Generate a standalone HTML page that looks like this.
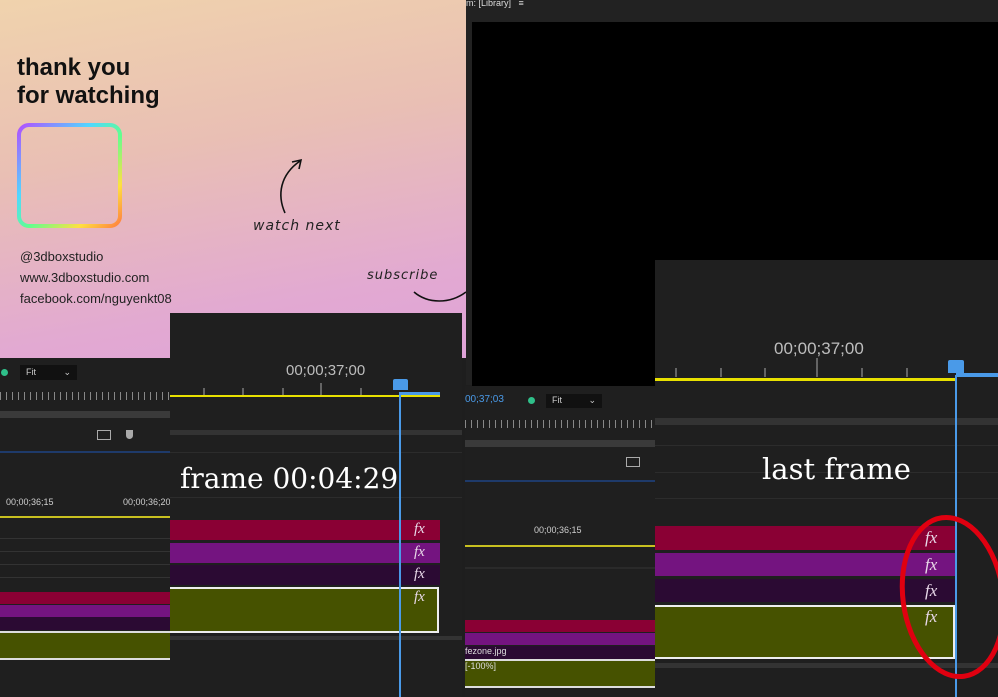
<!DOCTYPE html>
<html><head><meta charset="utf-8"><style>
*{margin:0;padding:0;box-sizing:border-box}
body{width:998px;height:697px;overflow:hidden;background:#1e1e1e;position:relative;font-family:"Liberation Sans",sans-serif}
.a{position:absolute}
.serif{font-family:"DejaVu Serif","Liberation Serif",serif;color:#fff}
.fx{position:absolute;font-family:"Liberation Serif",serif;font-style:italic;color:#e8d8e8;font-size:15px}
.tc{color:#bdbdbd;font-size:15px}
.sm{color:#cfcfcf;font-size:9px}
</style></head><body>
<div class="a" style="left:0;top:0;width:466px;height:358px;background:linear-gradient(170deg,#f0d3ad 0%,#e9bfb4 40%,#e2a9d2 80%,#dfa3d8 100%)"></div>
<div class="a" style="left:17px;top:54px;font-weight:bold;font-size:24px;line-height:28px;color:#111">thank you<br>for watching</div>
<svg class="a" style="left:15px;top:121px" width="110" height="110"><defs><linearGradient id="g" x1="0" y1="0" x2="1" y2="1"><stop offset="0" stop-color="#b050ff"/><stop offset=".35" stop-color="#50d8ff"/><stop offset=".55" stop-color="#60ff90"/><stop offset=".8" stop-color="#ffe040"/><stop offset="1" stop-color="#ff8040"/></linearGradient><linearGradient id="g2" x1="0" y1="0" x2="0" y2="1"><stop offset="0" stop-color="#e050ff"/><stop offset="1" stop-color="#ff9040"/></linearGradient></defs>
<rect x="4" y="4" width="101" height="101" rx="10" fill="none" stroke="url(#g)" stroke-width="4"/>
<path d="M4 20 V95" stroke="url(#g2)" stroke-width="4"/></svg>
<div class="a" style="left:20px;top:246px;font-size:13px;line-height:21px;color:#222">@3dboxstudio<br>www.3dboxstudio.com<br>facebook.com/nguyenkt08</div>
<svg class="a" style="left:275px;top:155px" width="40" height="60"><path d="M10 58 C2 40,5 20,25 6 M17 7 L26 5 L24 14" fill="none" stroke="#111" stroke-width="1.6"/></svg>
<div class="a" style="left:253px;top:218px;font-style:italic;font-size:14px;color:#222;letter-spacing:1px;font-family:'DejaVu Sans',sans-serif">watch next</div>
<div class="a" style="left:367px;top:268px;font-style:italic;font-size:13px;color:#222;letter-spacing:1px;font-family:'DejaVu Sans',sans-serif">subscribe</div>
<svg class="a" style="left:410px;top:282px" width="60" height="25"><path d="M4 10 C18 22,40 22,56 10" fill="none" stroke="#111" stroke-width="1.6"/></svg>
<div class="a" style="left:466px;top:0;width:532px;height:385px;background:#222"></div>
<div class="a sm" style="left:466px;top:-2px;font-size:9px;color:#ddd">m: [Library] &nbsp; ≡</div>
<div class="a" style="left:472px;top:22px;width:526px;height:364px;background:#000"></div>
<div class="a" style="left:0;top:358px;width:170px;height:339px;background:#1f1f1f"></div>
<div class="a" style="left:1px;top:369px;width:7px;height:7px;border-radius:50%;background:#2fc08a"></div>
<div class="a" style="left:20px;top:365px;width:57px;height:15px;background:#111;color:#ccc;font-size:9px;padding:2px 6px">Fit <span style="float:right">⌄</span></div>
<div class="a" style="left:0;top:392px;width:170px;height:8px;background:repeating-linear-gradient(90deg,#888 0 1px,transparent 1px 6px)"></div>
<div class="a" style="left:0;top:411px;width:170px;height:7px;background:#3a3a3a"></div>
<div class="a" style="left:97px;top:430px;width:14px;height:10px;border:1.5px solid #aaa"></div>
<div class="a" style="left:126px;top:430px;width:7px;height:9px;background:#aaa;border-radius:0 0 4px 4px"></div>
<div class="a" style="left:0;top:451px;width:170px;height:2px;background:#1e3a6a"></div>
<div class="a sm" style="left:6px;top:497px">00;00;36;15</div>
<div class="a sm" style="left:123px;top:497px">00;00;36;20</div>
<div class="a" style="left:0;top:516px;width:170px;height:2px;background:#c8c020"></div>
<div class="a" style="left:0;top:538px;width:170px;height:1px;background:#333"></div>
<div class="a" style="left:0;top:551px;width:170px;height:1px;background:#333"></div>
<div class="a" style="left:0;top:564px;width:170px;height:1px;background:#333"></div>
<div class="a" style="left:0;top:577px;width:170px;height:1px;background:#333"></div>
<div class="a" style="left:0;top:592px;width:170px;height:12px;background:#8a0034"></div>
<div class="a" style="left:0;top:605px;width:170px;height:12px;background:#741480"></div>
<div class="a" style="left:0;top:617px;width:170px;height:13px;background:#2b0a33"></div>
<div class="a" style="left:0;top:631px;width:170px;height:29px;background:#465200;border-top:2px solid #ddd;border-bottom:2px solid #ddd"></div>
<div class="a" style="left:465px;top:386px;width:190px;height:311px;background:#1f1f1f"></div>
<div class="a" style="left:465px;top:394px;font-size:10px;color:#4a9ae8">00;37;03</div>
<div class="a" style="left:528px;top:397px;width:7px;height:7px;border-radius:50%;background:#2fc08a"></div>
<div class="a" style="left:546px;top:394px;width:56px;height:14px;background:#111;color:#ccc;font-size:9px;padding:1px 6px">Fit <span style="float:right">⌄</span></div>
<div class="a" style="left:465px;top:420px;width:190px;height:8px;background:repeating-linear-gradient(90deg,#888 0 1px,transparent 1px 6px)"></div>
<div class="a" style="left:465px;top:440px;width:190px;height:7px;background:#3a3a3a"></div>
<div class="a" style="left:626px;top:457px;width:14px;height:10px;border:1.5px solid #aaa"></div>
<div class="a" style="left:465px;top:480px;width:190px;height:2px;background:#1e3a6a"></div>
<div class="a sm" style="left:534px;top:525px">00;00;36;15</div>
<div class="a" style="left:465px;top:545px;width:190px;height:2px;background:#c8c020"></div>
<div class="a" style="left:465px;top:567px;width:190px;height:2px;background:#2a2a2a"></div>
<div class="a" style="left:465px;top:620px;width:190px;height:12px;background:#8a0034"></div>
<div class="a" style="left:465px;top:633px;width:190px;height:12px;background:#741480"></div>
<div class="a sm" style="left:465px;top:646px;width:190px;height:13px;background:#2b0a33;color:#ddd">fezone.jpg</div>
<div class="a sm" style="left:465px;top:659px;width:190px;height:29px;background:#465200;border-top:2px solid #ddd;border-bottom:2px solid #ddd;color:#ddd">[-100%]</div>
<div class="a" style="left:170px;top:313px;width:292px;height:384px;background:#1f1f1f"></div>
<div class="a tc" style="left:286px;top:362px">00;00;37;00</div>
<svg class="a" style="left:170px;top:380px" width="292" height="20"><g stroke="#aaa" stroke-width="1"><path d="M34 8V15M73 8V15M113 8V15M151 3V15M191 8V15"/></g></svg>
<div class="a" style="left:170px;top:395px;width:270px;height:2px;background:#e8e000"></div>
<div class="a" style="left:400px;top:392px;width:40px;height:3px;background:#4a9ae8"></div>
<div class="a" style="left:393px;top:379px;width:15px;height:11px;background:#4a9ae8;border-radius:2px 2px 0 0"></div>
<div class="a" style="left:170px;top:430px;width:292px;height:5px;background:#333"></div>
<div class="a" style="left:170px;top:452px;width:292px;height:1px;background:#2c2c2c"></div>
<div class="a" style="left:170px;top:497px;width:292px;height:1px;background:#2c2c2c"></div>
<div class="a serif" style="left:180px;top:462px;font-size:28px">frame 00:04:29</div>
<div class="a" style="left:170px;top:520px;width:270px;height:20px;background:#8a0034"></div>
<div class="a" style="left:170px;top:543px;width:270px;height:20px;background:#741480"></div>
<div class="a" style="left:170px;top:565px;width:270px;height:20px;background:#2b0a33"></div>
<div class="a" style="left:170px;top:587px;width:269px;height:46px;background:#465200;border:2px solid #eee;border-left:none"></div>
<div class="fx" style="left:414px;top:521px">fx</div>
<div class="fx" style="left:414px;top:544px">fx</div>
<div class="fx" style="left:414px;top:566px">fx</div>
<div class="fx" style="left:414px;top:589px">fx</div>
<div class="a" style="left:170px;top:636px;width:292px;height:4px;background:#333"></div>
<div class="a" style="left:399px;top:392px;width:2px;height:305px;background:#4a9ae8"></div>
<div class="a" style="left:655px;top:260px;width:343px;height:437px;background:#1f1f1f"></div>
<div class="a tc" style="left:774px;top:339px;font-size:17px">00;00;37;00</div>
<svg class="a" style="left:655px;top:355px" width="300" height="25"><g stroke="#aaa" stroke-width="1"><path d="M21 13V22M66 13V22M110 13V22M162 3V22M207 13V22M252 13V22"/></g></svg>
<div class="a" style="left:655px;top:378px;width:300px;height:3px;background:#e8e000"></div>
<div class="a" style="left:956px;top:373px;width:42px;height:4px;background:#4a9ae8"></div>
<div class="a" style="left:948px;top:360px;width:16px;height:13px;background:#4a9ae8;border-radius:2px 2px 0 0"></div>
<div class="a" style="left:655px;top:418px;width:343px;height:7px;background:#333"></div>
<div class="a" style="left:655px;top:445px;width:343px;height:1px;background:#2c2c2c"></div>
<div class="a" style="left:655px;top:472px;width:343px;height:1px;background:#2c2c2c"></div>
<div class="a" style="left:655px;top:498px;width:343px;height:1px;background:#2c2c2c"></div>
<div class="a serif" style="left:762px;top:452px;font-size:29px">last frame</div>
<div class="a" style="left:655px;top:526px;width:301px;height:24px;background:#8a0034"></div>
<div class="a" style="left:655px;top:553px;width:301px;height:23px;background:#741480"></div>
<div class="a" style="left:655px;top:579px;width:301px;height:23px;background:#2b0a33"></div>
<div class="a" style="left:655px;top:605px;width:300px;height:54px;background:#465200;border:2px solid #eee;border-left:none"></div>
<div class="fx" style="left:925px;top:528px;font-size:17px">fx</div>
<div class="fx" style="left:925px;top:555px;font-size:17px">fx</div>
<div class="fx" style="left:925px;top:581px;font-size:17px">fx</div>
<div class="fx" style="left:925px;top:607px;font-size:17px">fx</div>
<div class="a" style="left:655px;top:663px;width:343px;height:5px;background:#333"></div>
<div class="a" style="left:955px;top:375px;width:2px;height:322px;background:#4a9ae8"></div>
<svg class="a" style="left:895px;top:510px" width="103" height="175"><ellipse cx="58" cy="87" rx="50" ry="80" fill="none" stroke="#e00010" stroke-width="5" transform="rotate(-8 58 87)"/></svg>
</body></html>
